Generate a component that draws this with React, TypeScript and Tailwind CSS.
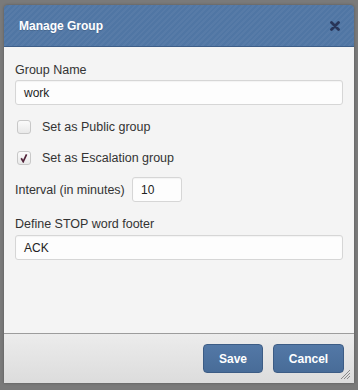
import React from 'react';

const font = { fontFamily: '"Liberation Sans", Arial, sans-serif' };

const CloseIcon = () => (
    <svg width="10" height="10" viewBox="0 0 10 10">
        <path d="M1.5 1.5 L8.5 8.5 M8.5 1.5 L1.5 8.5" stroke="#283559" strokeWidth="2.8" strokeLinecap="round" />
    </svg>
);

const CheckBox = ({ checked }: { checked?: boolean }) => (
    <span className="w-[14px] h-[14px] rounded-[3px] border border-[#c8c8c8] bg-[linear-gradient(#fbfbfb,#e9e9e9)] flex items-center justify-center shrink-0">
        {checked && (
            <svg width="10" height="10" viewBox="0 0 10 10">
                <path d="M2.2 5.2 L4.2 8.6 L7.6 1.4" stroke="#52243a" strokeWidth="1.7" fill="none" />
            </svg>
        )}
    </span>
);

const TextInput = ({ value, className = '' }: { value: string; className?: string }) => (
    <div className={`h-[25px] border border-[#d6d6d6] rounded-[3px] bg-[#fdfdfd] shadow-[inset_0_1px_1px_rgba(0,0,0,0.04)] flex items-center pl-[8px] text-[12px] text-[#222] ${className}`}>
        {value}
    </div>
);

export default function App() {
    return (
        <div className="w-[358px] h-[390px] bg-[#7a7a7a] pt-[5px] pl-[4px]" style={font}>
            <div className="w-[350px] h-[378px] flex flex-col rounded-t-[4px] overflow-hidden shadow-[0_0_3px_rgba(0,0,0,0.3)]">
                <div className="h-[42px] shrink-0 flex items-center justify-between pl-[15px] pr-[14px] border-b border-[#3d5e89] bg-[#5076a4] bg-[repeating-linear-gradient(135deg,rgba(255,255,255,0.04)_0px,rgba(255,255,255,0.04)_2px,transparent_2px,transparent_4px)]">
                    <span className="text-white font-bold text-[12px] [text-shadow:0_1px_0_rgba(0,0,0,0.15)]">Manage Group</span>
                    <CloseIcon />
                </div>
                <div className="flex-1 bg-[#f4f4f4] px-[11px] pt-[15px] text-[12.5px] leading-[16px] text-[#333]">
                    <div className="mb-[2px]">Group Name</div>
                    <TextInput value="work" />
                    <label className="flex items-center mt-[14px] ml-[2px] gap-[11px]">
                        <CheckBox />
                        <span>Set as Public group</span>
                    </label>
                    <label className="flex items-center mt-[15px] ml-[2px] gap-[11px]">
                        <CheckBox checked />
                        <span>Set as Escalation group</span>
                    </label>
                    <div className="flex items-center mt-[11px]">
                        <span className="w-[117px]">Interval (in minutes)</span>
                        <TextInput value="10" className="w-[50px]" />
                    </div>
                    <div className="mt-[14px] mb-[3px]">Define STOP word footer</div>
                    <TextInput value="ACK" />
                </div>
                <div className="relative h-[50px] shrink-0 border-t border-[#9c9c9c] bg-[linear-gradient(#ececec,#dcdcdc)] flex items-start justify-end gap-[10px] pt-[10px] pr-[10px]">
                    <button className="w-[60px] h-[29px] rounded-[4px] border border-[#3c5c85] bg-[linear-gradient(#5378a6,#486c98)] text-white font-bold text-[12px]">Save</button>
                    <button className="w-[71px] h-[29px] rounded-[4px] border border-[#3c5c85] bg-[linear-gradient(#5378a6,#486c98)] text-white font-bold text-[12px]">Cancel</button>
                    <svg className="absolute right-[3px] bottom-[3px]" width="11" height="11" viewBox="0 0 11 11">
                        <path d="M10 1 L1 10 M10 4 L4 10 M10 7 L7 10" stroke="#8a8a8a" strokeWidth="1" />
                    </svg>
                </div>
            </div>
        </div>
    );
}
